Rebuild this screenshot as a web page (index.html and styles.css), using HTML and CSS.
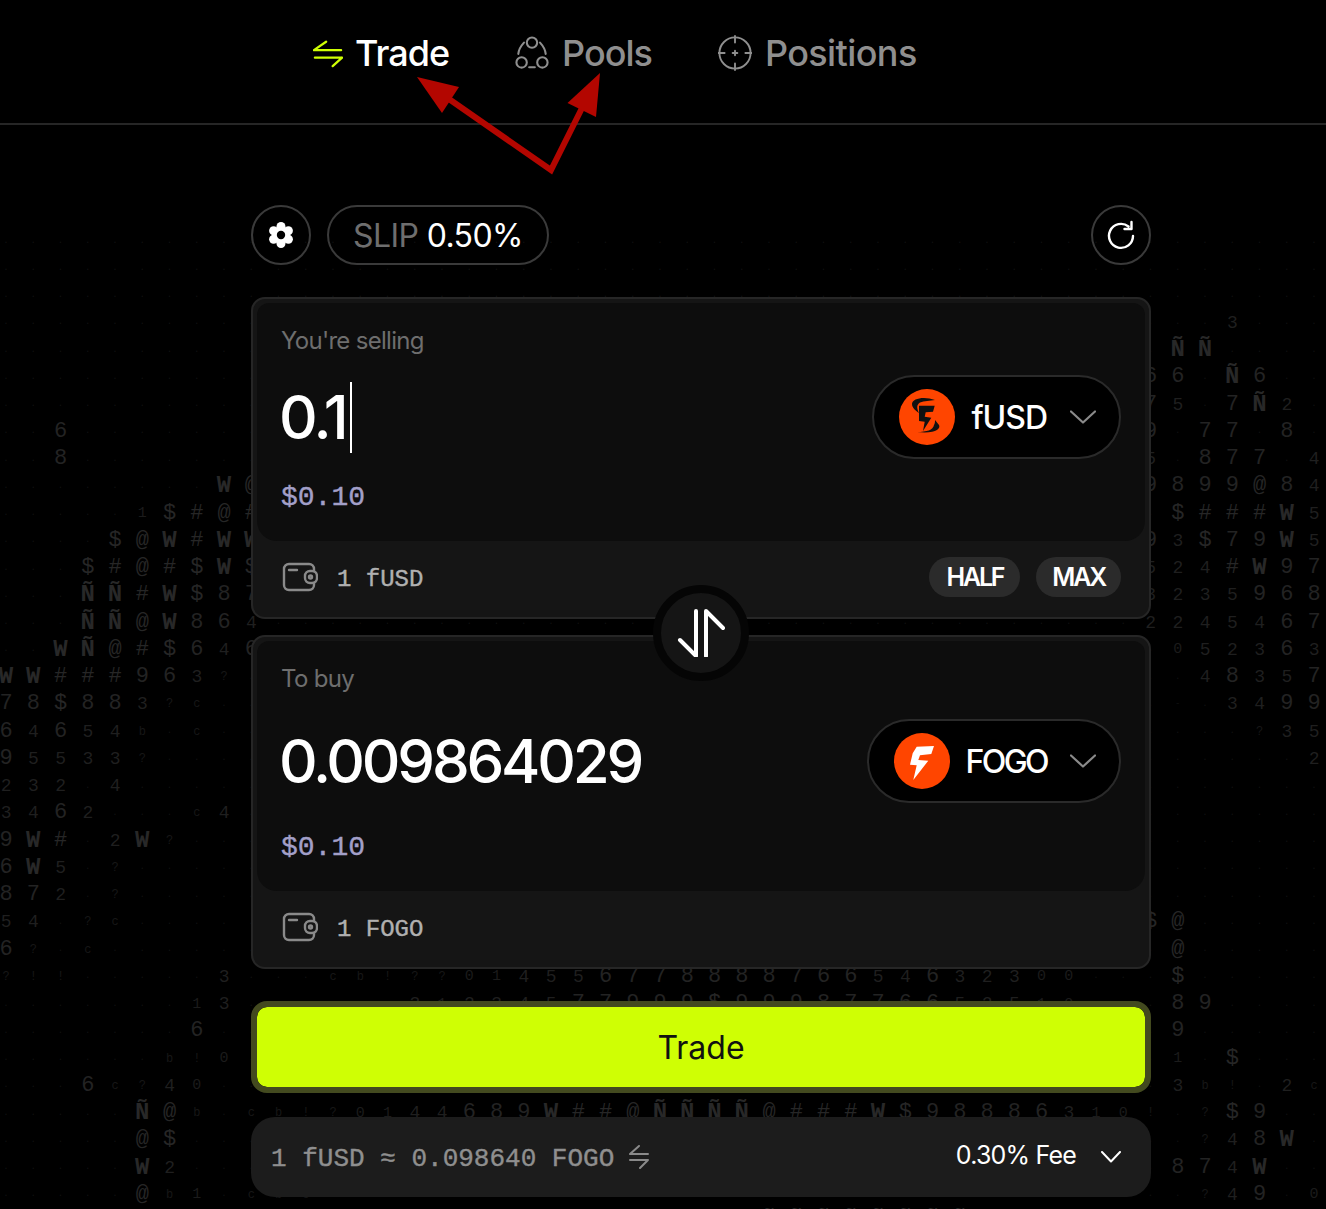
FILE: index.html
```html
<!DOCTYPE html>
<html lang="en">
<head>
    <meta charset="UTF-8">
    <meta name="viewport" content="width=device-width, initial-scale=1.0">
    <title>Trade</title>
    <link rel="stylesheet" href="styles.css">
</head>
<body>

    <div class="matrix" id="matrix"></div>

    <nav class="nav">
        <a class="nav-item active">
            <svg class="nav-icon" viewBox="0 0 32 32" fill="none" stroke="#cfff04" stroke-width="2.4" stroke-linecap="round" stroke-linejoin="round"><path d="M1 13 14 4M1 13H30M31 21H2M31 21 21 30"/></svg>
            Trade
        </a>
        <a class="nav-item">
            <svg class="nav-icon" viewBox="0 0 36 36" fill="none" stroke="#8f8f8f" stroke-width="2.2" stroke-linecap="round"><circle cx="18" cy="7" r="5.5"/><circle cx="7" cy="28" r="5.5"/><circle cx="29" cy="28" r="5.5"/><path d="M9.500 7Q4 13 3.500 19M26.500 7Q32 13 32.500 19M15 33H21"/></svg>
            Pools
        </a>
        <a class="nav-item">
            <svg class="nav-icon" viewBox="0 0 36 36" fill="none" stroke="#8f8f8f" stroke-width="2" stroke-linecap="round"><circle cx="18" cy="18" r="16.500"/><path d="M18 0V7M18 29V36M0 18H7M29 18H36M18 15.500V20.500M15.500 18H20.500"/></svg>
            Positions
        </a>
    </nav>

    <main class="swap">
        <div class="toolbar">
            <button class="round-btn">
                <svg width="28" height="28" viewBox="0 0 28 28" fill="#fff"><circle cx="14" cy="5.500" r="4.500"/><circle cx="14" cy="22.500" r="4.500"/><circle cx="6.600" cy="9.700" r="4.500"/><circle cx="21.400" cy="9.700" r="4.500"/><circle cx="6.600" cy="18.300" r="4.500"/><circle cx="21.400" cy="18.300" r="4.500"/><circle cx="14" cy="14" r="9"/><circle cx="14" cy="14" r="4.200" fill="#000"/></svg>
            </button>
            <button class="slip-btn"><span class="slip-label">SLIP</span> 0.50%</button>
            <button class="round-btn refresh">
                <svg width="30" height="30" viewBox="0 0 30 30" fill="none" stroke="#fff" stroke-width="2.400" stroke-linecap="round" stroke-linejoin="round"><path d="M27 16A12 12 0 1 1 22.500 6.500M25.500 2V9H18.500"/></svg>
            </button>
        </div>

        <section class="card">
            <div class="panel">
                <div class="panel-label">You're selling</div>
                <div class="panel-main">
                    <div class="amount">0.1<span class="caret"></span></div>
                    <button class="token">
                        <svg class="token-logo" viewBox="0 0 56 56"><circle cx="28" cy="28" r="28" fill="#ff4500"/><path fill="#111" d="M20 16.700 35.700 16.700 34 22.700 26.700 23.300 25.700 27.700 32.300 28.700 24 42 25.700 32.700 20 32ZM36 11C26 7 13 9 13 15 13 19 17 22 20 24 18 20 17 16 21 13.500 25 12 31 12 36 11ZM40 36C42 40 36 45 18 43 28 43 34 41 35 36 36 34 36 33 36 31Z"/></svg>
                        <span class="token-name">fUSD</span>
                        <svg class="chevron" viewBox="0 0 26 14" fill="none" stroke="#8a8a8a" stroke-width="2.200" stroke-linecap="round" stroke-linejoin="round"><path d="M1 1.500 13 12.500 25 1.500"/></svg>
                    </button>
                </div>
                <div class="usd">$0.10</div>
            </div>
            <div class="balance">
                <svg class="wallet" viewBox="0 0 36 30" fill="none" stroke="#8a8a8a" stroke-width="2.400" stroke-linecap="round"><path d="M32 9V7A5 5 0 0 0 27 2H7A5 5 0 0 0 2 7V23A5 5 0 0 0 7 28H27A5 5 0 0 0 32 23V21"/><path d="M7 8H15"/><rect x="23" y="9" width="12" height="12" rx="5"/><circle cx="28.500" cy="15" r="1.500"/></svg>
                <span class="balance-text">1 fUSD</span>
                <div class="balance-actions">
                    <button class="chip">HALF</button>
                    <button class="chip chip-max">MAX</button>
                </div>
            </div>
        </section>

        <button class="flip">
            <svg width="48" height="48" viewBox="0 0 48 48" fill="none" stroke="#fff" stroke-width="4" stroke-linecap="round" stroke-linejoin="round"><path d="M19 2V47L3 31M29 47V2L46 19"/></svg>
        </button>

        <section class="card card-buy">
            <div class="panel">
                <div class="panel-label">To buy</div>
                <div class="panel-main">
                    <div class="amount">0.009864029</div>
                    <button class="token">
                        <svg class="token-logo" viewBox="0 0 56 56"><circle cx="28" cy="28" r="28" fill="#ff4500"/><path fill="#fff" d="M22.700 13.700 40 13 37.300 21 26 22.300 24.300 27 34.300 27.700 19.300 47 22.700 32.300 16 31.700 18.700 20.300Z"/></svg>
                        <span class="token-name token-name-wide">FOGO</span>
                        <svg class="chevron" viewBox="0 0 26 14" fill="none" stroke="#8a8a8a" stroke-width="2.200" stroke-linecap="round" stroke-linejoin="round"><path d="M1 1.500 13 12.500 25 1.500"/></svg>
                    </button>
                </div>
                <div class="usd">$0.10</div>
            </div>
            <div class="balance">
                <svg class="wallet" viewBox="0 0 36 30" fill="none" stroke="#8a8a8a" stroke-width="2.400" stroke-linecap="round"><path d="M32 9V7A5 5 0 0 0 27 2H7A5 5 0 0 0 2 7V23A5 5 0 0 0 7 28H27A5 5 0 0 0 32 23V21"/><path d="M7 8H15"/><rect x="23" y="9" width="12" height="12" rx="5"/><circle cx="28.500" cy="15" r="1.500"/></svg>
                <span class="balance-text">1 FOGO</span>
            </div>
        </section>

        <button class="trade-btn">Trade</button>

        <div class="rate">
            <span class="rate-text">1 fUSD ≈ 0.098640 FOGO</span>
            <svg class="rate-swap" viewBox="0 0 20 24" fill="none" stroke="#8a8a8a" stroke-width="2" stroke-linecap="round" stroke-linejoin="round"><path d="M10 1 1 9H19M19 15H1M19 15 11 23"/></svg>
            <span class="rate-fee">0.30% Fee</span>
            <svg class="rate-chevron" viewBox="0 0 20 12" fill="none" stroke="#fff" stroke-width="2" stroke-linecap="round" stroke-linejoin="round"><path d="M1 1 10 10.500 19 1"/></svg>
        </div>
    </main>

    <svg class="marks" viewBox="0 0 1326 1209" fill="#b30600">
        <path d="M436 90 551 170 587 98" fill="none" stroke="#b30600" stroke-width="6" stroke-miterlimit="8"/>
        <path d="M417 77 459 87 442 113Z"/>
        <path d="M600 73 596 117 567.500 103Z"/>
    </svg>

    <script src="matrix.js"></script>
</body>
</html>
```

FILE: styles.css
```css
* {
    box-sizing: border-box;
}

html, body {
    margin: 0;
    height: 1209px;
    overflow: hidden;
}

body {
    position: relative;
    background: #000;
    color: #fff;
    font-family: 'Inter', sans-serif;
}

button {
    font-family: inherit;
    color: inherit;
    border: none;
    padding: 0;
    background: none;
    cursor: pointer;
}

/* ascii field behind everything */
.matrix {
    position: absolute;
    top: 9.6px;
    left: -7.6px;
    display: grid;
    grid-template-columns: repeat(49, 27.25px);
    grid-auto-rows: 27.25px;
    font-family: 'Liberation Mono', monospace;
}

.matrix span {
    display: flex;
    align-items: center;
    justify-content: center;
    line-height: 1;
}

.g0 { font-size: 9px; color: #121212; }
.g1 { font-size: 12px; color: #171717; }
.g2 { font-size: 15px; color: #1b1b1b; }
.g3 { font-size: 18px; color: #1f1f1f; }
.g4 { font-size: 22px; color: #232323; }
.g5 { font-size: 22px; color: #262626; }
.g6 { font-size: 24px; color: #282828; font-weight: 700; }

.nav {
    position: relative;
    display: flex;
    align-items: center;
    gap: 66px;
    height: 125px;
    padding: 0 0 18px 313px;
    border-bottom: 2px solid #262626;
}

.nav-item {
    display: flex;
    align-items: center;
    gap: 13px;
    font-size: 36px;
    font-weight: 500;
    letter-spacing: -1px;
    color: #8f8f8f;
}

.nav-item:last-child {
    letter-spacing: -0.6px;
}

.nav-item.active {
    gap: 12px;
    color: #fff;
}

.nav-icon {
    width: 34px;
    height: 36px;
}

.active .nav-icon {
    width: 30px;
}

.swap {
    position: relative;
    width: 900px;
    margin-left: 251px;
    padding-top: 80px;
}

.toolbar {
    display: flex;
    align-items: center;
    gap: 16px;
    margin-bottom: 32px;
}

.round-btn {
    display: flex;
    align-items: center;
    justify-content: center;
    width: 60px;
    height: 60px;
    border: 2px solid #3a3a3a;
    border-radius: 50%;
}

.refresh {
    margin-left: auto;
}

.slip-btn {
    height: 60px;
    padding: 0 24px;
    border: 2px solid #3a3a3a;
    border-radius: 30px;
    font-size: 32px;
    letter-spacing: -0.6px;
}

.slip-label {
    color: #6e6e6e;
}

.card {
    position: relative;
    height: 322px;
    margin-bottom: 16px;
    padding: 4px;
    background: #151515;
    border: 2px solid #262626;
    border-radius: 14px;
}

.card-buy {
    height: 334px;
    margin-bottom: 32px;
}

.panel {
    height: 238px;
    padding: 23px 24px 0;
    background: #0d0d0d;
    border-radius: 12px 12px 20px 20px;
}

.card-buy .panel {
    height: 250px;
}

.panel-label {
    font-size: 24px;
    line-height: 30px;
    letter-spacing: -0.7px;
    color: #6e6e6e;
}

.panel-main {
    display: flex;
    align-items: center;
    justify-content: space-between;
    margin-top: 19px;
}

.card-buy .panel-main {
    margin-top: 25px;
}

.amount {
    display: flex;
    align-items: center;
    height: 84px;
    margin-left: -2px;
    font-size: 60px;
    font-weight: 500;
    letter-spacing: -2.6px;
}

.card-buy .amount {
    letter-spacing: -3.2px;
}

.caret {
    width: 2px;
    height: 71px;
    margin-left: 4px;
    background: #fff;
}

.token {
    display: flex;
    align-items: center;
    height: 84px;
    padding: 0 23px 0 25px;
    background: #000;
    border: 2px solid #2a2a2a;
    border-radius: 42px;
}

.token-logo {
    width: 56px;
    height: 56px;
}

.token-name {
    margin: 0 23px 0 16px;
    font-size: 32px;
    font-weight: 500;
    letter-spacing: -1px;
}

.token-name-wide {
    letter-spacing: -2.6px;
}

.chevron {
    width: 26px;
    height: 14px;
}

.usd {
    margin-top: 19px;
    font-family: 'Liberation Mono', monospace;
    font-size: 28px;
    line-height: 40px;
    color: #a29fc8;
    -webkit-text-stroke: 0.4px #a29fc8;
}

.card-buy .usd {
    margin-top: 25px;
}

.balance {
    display: flex;
    align-items: center;
    height: 72px;
    padding: 0 24px 0 25px;
}

.wallet {
    width: 36px;
    height: 30px;
}

.balance-text {
    position: relative;
    top: 2px;
    margin-left: 19px;
    font-family: 'Liberation Mono', monospace;
    font-size: 24px;
    color: #b0b0b0;
    -webkit-text-stroke: 0.4px #b0b0b0;
}

.balance-actions {
    display: flex;
    gap: 16px;
    margin-left: auto;
}

.chip {
    height: 40px;
    padding: 0 17px;
    background: #2b2b2b;
    border-radius: 20px;
    font-size: 25px;
    font-weight: 600;
    letter-spacing: -2.2px;
}

.chip-max {
    padding: 0 16px;
}

.flip {
    position: absolute;
    z-index: 1;
    top: 460px;
    left: 402px;
    display: flex;
    align-items: center;
    justify-content: center;
    width: 96px;
    height: 96px;
    background: #151515;
    border: 8px solid #050505;
    border-radius: 50%;
}

.trade-btn {
    display: block;
    width: 100%;
    height: 92px;
    background: #cfff04;
    background-clip: padding-box;
    border: 6px solid #434a1f;
    border-radius: 16px;
    font-size: 32px;
    color: #111;
}

.rate {
    display: flex;
    align-items: center;
    height: 80px;
    margin-top: 24px;
    padding: 0 30px 0 20px;
    background: #1c1c1c;
    border-radius: 24px;
}

.rate-text {
    position: relative;
    top: 2px;
    font-family: 'Liberation Mono', monospace;
    font-size: 26px;
    color: #8f8f8f;
    -webkit-text-stroke: 0.4px #8f8f8f;
}

.rate-swap {
    width: 20px;
    height: 24px;
    margin-left: 15px;
}

.rate-fee {
    margin-left: auto;
    font-size: 25px;
    letter-spacing: -0.8px;
    position: relative;
    top: -2px;
}

.rate-chevron {
    width: 20px;
    height: 12px;
    margin-left: 25px;
}

/* red arrows drawn on top of the screenshot */
.marks {
    position: absolute;
    top: 0;
    left: 0;
    z-index: 2;
    width: 1326px;
    height: 1209px;
    pointer-events: none;
}
```

FILE: matrix.js
```js
// [row, first column, characters] - a space leaves the cell to the faint dot
const runs = [
    [11, 45, "3"],
    [12, 43, "ÑÑ"],
    [13, 42, "66 Ñ6"],
    [14, 42, "75 7Ñ2"],
    [15, 2, "6"], [15, 42, "9 77 8"],
    [16, 2, "8"], [16, 42, "5 877 4"],
    [17, 8, "W@"], [17, 42, "9899@84"],
    [18, 5, "1$#@#"], [18, 43, "$###W5"],
    [19, 4, "$@W#WW"], [19, 42, "93$79W5"],
    [20, 3, "$#@#$W$"], [20, 42, "524#W97"],
    [21, 3, "ÑÑ#W$87"], [21, 42, "3235968"],
    [22, 3, "ÑÑ@W864"], [22, 42, "2245467"],
    [23, 2, "WÑ@#$646"], [23, 43, "052363"],
    [24, 0, "WW###963?"], [24, 43, ".48357"],
    [25, 0, "78$883?c."], [25, 43, "-.3499"],
    [26, 0, "64654b.c"], [26, 44, ". ?35"],
    [27, 0, "95533?."], [27, 47, ".2"],
    [28, 0, "232.4"],
    [29, 0, "3462. .c4"],
    [30, 0, "9W#.2W?"],
    [31, 0, "6W5.?"],
    [32, 0, "872.?"],
    [33, 0, "54.?c"], [33, 42, "$@"],
    [34, 0, "6?.c"], [34, 43, "@"],
    [35, 0, "?!!"], [35, 8, "3"], [35, 12, "cb!??"], [35, 17, "01455677888876654632300"], [35, 43, "$"],
    [36, 7, "13"], [36, 15, "3123457799"], [36, 25, "9$9998776652510"], [36, 43, "89"],
    [37, 7, "6"], [37, 43, "9"], [37, 38, "."],
    [38, 43, "1"], [38, 45, "$"], [38, 6, "b!0"],
    [39, 3, "6c?40"], [39, 43, "3b!"], [39, 47, "2c"],
    [40, 5, "Ñ@b"], [40, 9, "cb!?0144689W##@ÑÑÑÑ@###W$98886310!.?"], [40, 45, "$9"],
    [41, 5, "@$"], [41, 44, "?48W"],
    [42, 5, "W2"], [42, 43, "874W"],
    [43, 5, "@b1"], [43, 9, "cbc"], [43, 44, "?49 0"],
    [44, 20, "0799WWccÑÑÑÑÑÑÑÑc##$$00"]
];

const levels = [
    [".,-'", "g0"],
    ["?!cb", "g1"],
    ["01", "g2"],
    ["2345", "g3"],
    ["6789", "g4"],
    ["$#@", "g5"],
    ["WÑ", "g6"]
];

const COLS = 49;
const ROWS = 45;
const cells = [];

for (let r = 0; r < ROWS; r++) {
    cells.push(new Array(COLS).fill(r >= 8 ? "." : ""));
}

runs.forEach(([row, col, text]) => {
    [...text].forEach((ch, i) => {
        if (ch !== " " && col + i < COLS) {
            cells[row][col + i] = ch;
        }
    });
});

const matrix = document.getElementById("matrix");

cells.flat().forEach((ch) => {
    const span = document.createElement("span");
    const level = levels.find(([chars]) => ch && chars.includes(ch));
    span.textContent = ch;
    if (level) {
        span.className = level[1];
    }
    matrix.appendChild(span);
});
```
